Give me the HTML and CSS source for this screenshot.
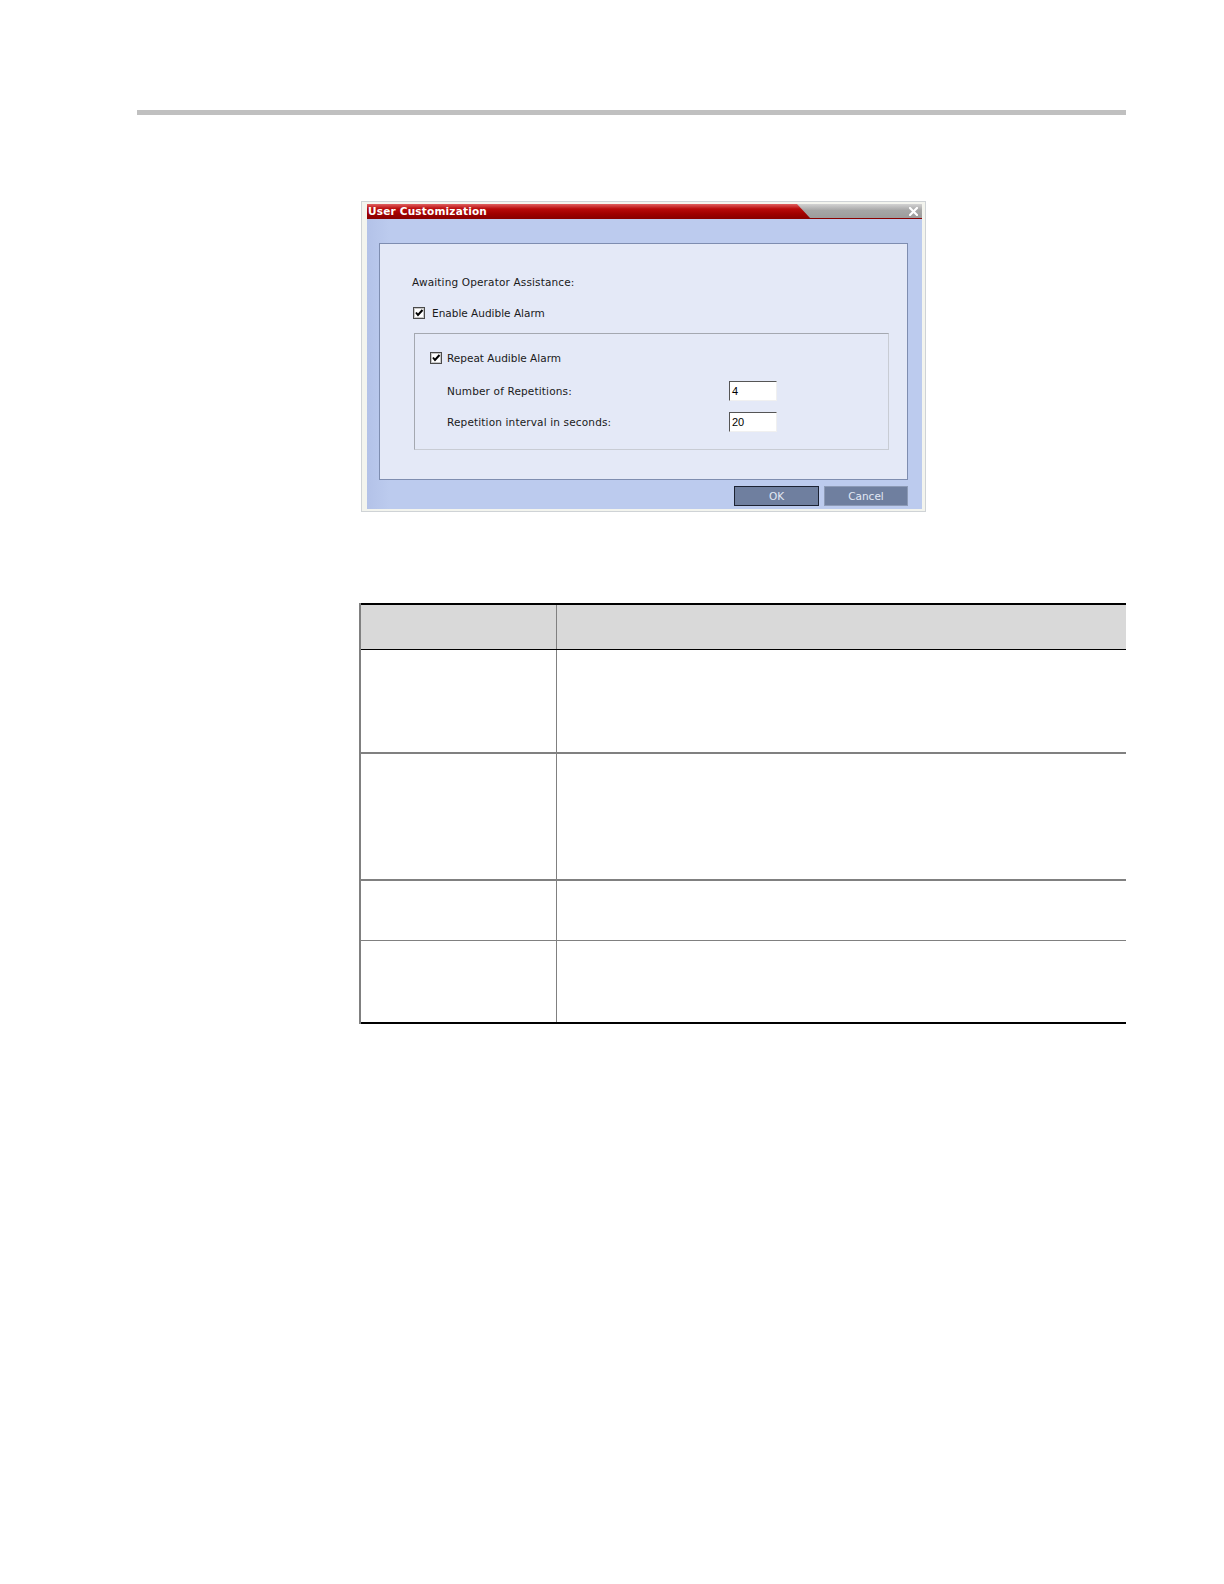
FILE: index.html
```html
<!DOCTYPE html>
<html>
<head>
<meta charset="utf-8">
<meta name="viewport" content="width=device-width, initial-scale=1">
<link rel="stylesheet" href="styles.css">
</head>
<body>
<div class="page">
  <div class="toprule"></div>

  <div class="dlg">
    <div class="titlebar">
      <div class="title-red"><span class="title-text">User Customization</span></div>
      <svg class="close" width="9" height="9" viewBox="0 0 9 9"><path d="M1 1 L8 8 M8 1 L1 8" stroke="#fff" stroke-width="2.2" stroke-linecap="square"/></svg>
    </div>
    <div class="dlg-body">
      <div class="panel">
        <div class="row heading">Awaiting Operator Assistance:</div>
        <div class="row check-row enable">
          <svg class="cb" width="12" height="12" viewBox="0 0 12 12"><rect x="0.5" y="0.5" width="11" height="11" fill="#fff" stroke="#4a4a4a"/><rect x="1.5" y="1.5" width="9" height="9" fill="none" stroke="#c8c8c8"/><path d="M3 5.5 L5 8 L9.5 3" fill="none" stroke="#000" stroke-width="2"/></svg>
          <span>Enable Audible Alarm</span>
        </div>
        <div class="group">
          <div class="row check-row">
            <svg class="cb" width="12" height="12" viewBox="0 0 12 12"><rect x="0.5" y="0.5" width="11" height="11" fill="#fff" stroke="#4a4a4a"/><rect x="1.5" y="1.5" width="9" height="9" fill="none" stroke="#c8c8c8"/><path d="M3 5.5 L5 8 L9.5 3" fill="none" stroke="#000" stroke-width="2"/></svg>
            <span>Repeat Audible Alarm</span>
          </div>
          <div class="field first">
            <span class="label">Number of Repetitions:</span>
            <span class="input">4</span>
          </div>
          <div class="field">
            <span class="label">Repetition interval in seconds:</span>
            <span class="input">20</span>
          </div>
        </div>
      </div>
      <div class="buttons">
        <span class="btn ok">OK</span>
        <span class="btn">Cancel</span>
      </div>
    </div>
  </div>

  <table class="grid">
    <tr class="head"><td class="c1"></td><td></td></tr>
    <tr class="r1"><td class="c1"></td><td></td></tr>
    <tr class="r2"><td class="c1"></td><td></td></tr>
    <tr class="r3"><td class="c1"></td><td></td></tr>
    <tr class="r4"><td class="c1"></td><td></td></tr>
  </table>
</div>
</body>
</html>
```
FILE: styles.css
```css
* { box-sizing: border-box; }
html { overflow: hidden; }
html, body { margin: 0; padding: 0; background: #fff; }
body { font-family: "DejaVu Sans", Verdana, sans-serif; }
.page { padding-top: 110px; }

.toprule { margin-left: 137px; width: 989px; height: 5px; background: #c0c0c0; }

.dlg {
  margin-top: 86px; margin-left: 361px;
  width: 565px; height: 311px;
  border: 1px solid #cfd3d6;
  background: #f3f4ee;
  padding: 2px 3px 2px 5px;
  display: flex; flex-direction: column;
}
.titlebar {
  height: 15px; position: relative;
  background: linear-gradient(#d2d2d2, #a6a6a6 45%, #9c9c9c);
  display: flex; align-items: center; justify-content: flex-end;
  border-bottom: 1px solid #8a0000;
}
.title-red {
  position: absolute; left: 0; top: 0; bottom: 0; width: 443px;
  background: linear-gradient(#e06060, #b80a0a 35%, #a00000 70%, #8c0000);
  clip-path: polygon(0 0, 430px 0, 443px 100%, 0 100%);
  display: flex; align-items: center;
}
.title-text {
  color: #fff; font-weight: bold; font-size: 10.5px; padding-left: 1px; letter-spacing: 0.2px;
}
.close { margin-right: 4px; }

.dlg-body {
  flex: 1;
  background: linear-gradient(90deg, #b3c2e8, #bccbee 4%, #bccbee);
  padding: 24px 14px 0 12px;
}
.panel {
  height: 237px;
  border: 1px solid #7e8db0;
  background: #e4e9f7;
  padding: 31px 18px 0 32px;
  font-size: 10.5px; color: #1a1a1a;
}
.row { height: 14px; display: flex; align-items: center; white-space: nowrap; }
.heading { letter-spacing: 0.15px; }
.enable { margin-top: 17px; margin-left: 1px; }
.check-row .cb { flex: none; margin-right: 7px; }
.group {
  margin-top: 13px; margin-left: 2px;
  height: 117px;
  border: 1px solid #a4a8b0;
  border-right-color: #c8ccd4; border-bottom-color: #c8ccd4;
  padding: 17px 0 0 15px;
}
.group .check-row .cb { margin-right: 5px; }
.field { display: flex; align-items: center; height: 20px; margin-top: 11px; padding-left: 17px; }
.field.first { margin-top: 16px; }
.label { width: 282px; flex: none; letter-spacing: 0.15px; }
.input {
  width: 48px; height: 20px; background: #fff;
  border: 1px solid #f0f0f0; border-top-color: #555; border-left-color: #555;
  font-family: "Liberation Sans", Arial, sans-serif; font-size: 11px; color: #000;
  padding: 3px 0 0 2px; line-height: 1.1;
}

.buttons { display: flex; justify-content: flex-end; gap: 5px; margin-top: 6px; }
.btn {
  width: 84px; height: 20px; display: flex; align-items: center; justify-content: center;
  background: #6f7f9f; color: #e2e8f4; font-size: 10.5px;
  border: 1px solid #8c9ab6;
}
.btn.ok { width: 85px; border-color: #1c2232; }

.grid {
  margin-top: 91px; margin-left: 359px; width: 767px;
  border-collapse: collapse;
  border-top: 2px solid #000; border-bottom: 2px solid #000; border-left: 2px solid #808080;
}
.grid td { padding: 0; border-left: 1px solid #808080; }
.grid td.c1 { width: 196px; border-left: 2px solid #808080; }
.grid .head td { height: 45px; background: #d9d9d9; border-bottom: 1px solid #000; }
.grid .r1 td { height: 104px; border-bottom: 2px solid #808080; }
.grid .r2 td { height: 127px; border-bottom: 2px solid #808080; }
.grid .r3 td { height: 60px; border-bottom: 1px solid #808080; }
.grid .r4 td { height: 83px; }
```
